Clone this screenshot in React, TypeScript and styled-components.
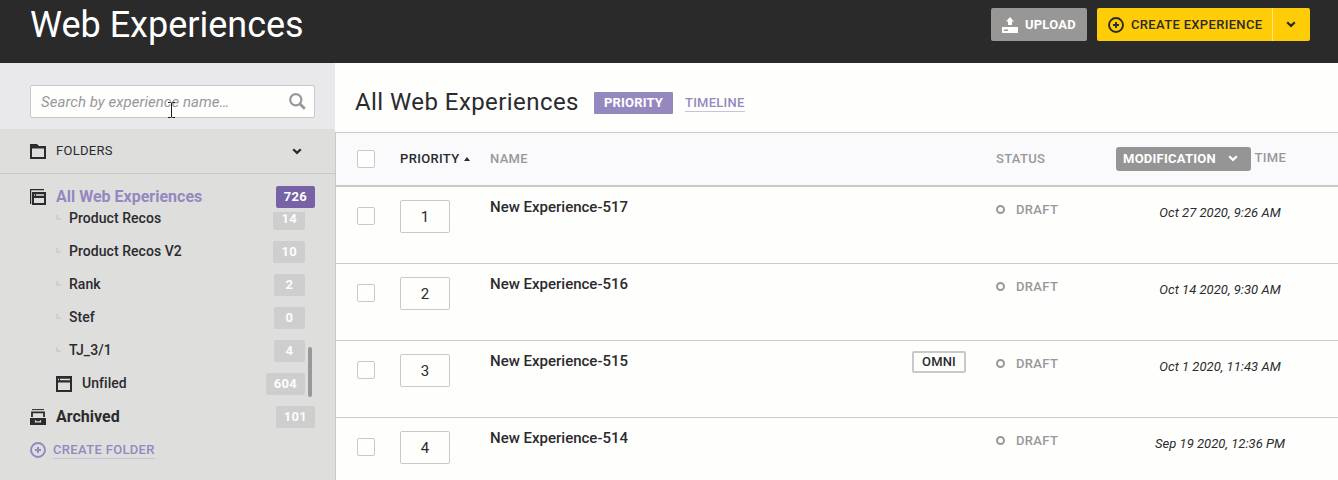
import React from "react";
import styled, { createGlobalStyle } from "styled-components";

const GlobalStyle = createGlobalStyle`
  * { box-sizing: border-box; }
  body {
    margin: 0;
    background: #fefefd;
    color: #2b2b2e;
    font-family: Roboto, "Liberation Sans", sans-serif;
    overflow: hidden;
  }
  button, input { font-family: inherit; }
  svg { display: block; flex: none; }
`;

const Page = styled.div`
  display: flex;
  flex-direction: column;
  width: 1338px;
  height: 480px;
  overflow: hidden;
`;

const TopBar = styled.header`
  display: flex;
  flex: none;
  height: 63px;
  padding: 0 28px 0 30px;
  background: #2a2a2b;
`;

const PageTitle = styled.h1`
  flex: 1;
  margin: 4px 0 0;
  color: #fff;
  font-size: 36px;
  font-weight: 400;
  line-height: 42px;
`;

const Actions = styled.div`
  display: flex;
  gap: 10px;
  margin-top: 8px;
  height: 33px;
`;

const UploadButton = styled.button`
  display: flex;
  align-items: center;
  gap: 7px;
  width: 96px;
  padding: 0 0 0 11px;
  border: 0;
  border-radius: 2px;
  background: #989795;
  color: #fff;
  font-size: 13px;
  font-weight: 700;
  letter-spacing: 0.2px;
`;

const SplitButton = styled.div`
  display: flex;
  width: 213px;
  border-radius: 2px;
  overflow: hidden;
  background: #fecd07;
`;

const SplitMain = styled.button`
  display: flex;
  align-items: center;
  gap: 7px;
  width: 176px;
  padding: 0 0 0 11px;
  border: 0;
  border-right: 1px solid #fee48a;
  background: none;
  color: #2b2b2e;
  font-size: 13px;
  font-weight: 500;
  letter-spacing: 0.33px;
  white-space: nowrap;
`;

const SplitToggle = styled.button`
  display: flex;
  flex: 1;
  align-items: center;
  justify-content: center;
  padding: 0 2px 0 0;
  border: 0;
  background: none;
  color: #2b2b2e;
`;

const Body = styled.div`
  display: flex;
  flex: 1;
  min-height: 0;
`;

const Sidebar = styled.aside`
  display: flex;
  flex-direction: column;
  flex: none;
  width: 335px;
  background: #dededd;
`;

const SearchArea = styled.div`
  flex: none;
  height: 66px;
  padding: 22px 20px 0 30px;
  background: #e9e9eb;
`;

const SearchBox = styled.label`
  position: relative;
  display: flex;
  align-items: center;
  height: 33px;
  padding: 0 8px 0 10px;
  border: 1px solid #c9c9cb;
  border-radius: 2px;
  background: #fefefd;
`;

const SearchInput = styled.input`
  flex: 1;
  min-width: 0;
  padding: 0;
  border: 0;
  outline: 0;
  background: none;
  color: #2b2b2e;
  font-size: 15px;
  font-style: italic;
  letter-spacing: 0.04px;
  &::placeholder { color: #98989a; opacity: 1; }
`;

const TextCursor = styled.svg`
  position: absolute;
  left: 137px;
  top: 16px;
`;

const FoldersHead = styled.div`
  display: flex;
  flex: none;
  align-items: center;
  height: 45px;
  padding: 0 33px 0 30px;
  border-bottom: 1px solid #c9c9c9;
`;

const FoldersLabel = styled.span`
  flex: 1;
  margin-left: 10px;
  font-size: 13px;
  letter-spacing: 0.3px;
  line-height: 16px;
`;

const Nav = styled.nav`
  display: flex;
  flex-direction: column;
  padding-top: 6px;
`;

const NavRow = styled.div<{ $nested?: boolean }>`
  display: flex;
  flex: none;
  align-items: center;
  height: 33px;
  padding: 0 ${(p) => (p.$nested ? 30 : 20)}px 0 ${(p) => (p.$nested ? 56 : 30)}px;
`;

const NavLabel = styled.span<{ $size?: number; $gap: number; $active?: boolean }>`
  flex: 1;
  margin-left: ${(p) => p.$gap}px;
  padding-bottom: ${(p) => (p.$size === 16 ? 0 : 2)}px;
  color: ${(p) => (p.$active ? "#9588bf" : "#2b2b2e")};
  font-size: ${(p) => p.$size ?? 14}px;
  font-weight: ${(p) => (p.$size === 16 ? 700 : 500)};
  letter-spacing: ${(p) => (p.$size === 16 ? 0 : 0.05)}px;
  line-height: 20px;
  white-space: nowrap;
`;

const Count = styled.span<{ $active?: boolean }>`
  min-width: 31px;
  height: 22px;
  margin-top: 1px;
  padding: 0 8px;
  border-radius: 2px;
  background: ${(p) => (p.$active ? "#7762a6" : "#cecece")};
  color: ${(p) => (p.$active ? "#fff" : "#fdfdfc")};
  font-size: 13px;
  font-weight: 700;
  letter-spacing: 0.3px;
  line-height: 22px;
  text-align: center;
`;

const Branch = styled.span`
  width: 5px;
  height: 5px;
  margin-top: -2px;
  border-left: 2px solid #cfcfd0;
  border-bottom: 2px solid #cfcfd0;
`;

const FolderScroll = styled.div`
  position: relative;
  display: flex;
  flex-direction: column;
  justify-content: flex-end;
  height: 188px;
  margin-top: -1px;
  overflow: hidden;
`;

const ScrollThumb = styled.div`
  position: absolute;
  top: 135px;
  right: 23px;
  width: 4px;
  height: 50px;
  border-radius: 2px;
  background: #98989a;
`;

const CreateFolder = styled.button`
  display: flex;
  align-items: center;
  gap: 7px;
  height: 33px;
  padding: 0 30px;
  border: 0;
  background: none;
  color: #9588bf;
`;

const LinkText = styled.span<{ $spacing: number }>`
  height: 18px;
  border-bottom: 1px solid #c9c2dc;
  color: #9588bf;
  font-size: 13px;
  font-weight: 500;
  letter-spacing: ${(p) => p.$spacing}px;
  line-height: 18px;
`;

const Main = styled.main`
  flex: 1;
  min-width: 0;
`;

const ListHeading = styled.div`
  display: flex;
  align-items: center;
  height: 69px;
  padding: 10px 0 0 20px;
`;

const ListTitle = styled.h2`
  width: 239px;
  margin: -2px 0 0;
  font-size: 24px;
  font-weight: 400;
  letter-spacing: 0.43px;
  line-height: 30px;
  white-space: nowrap;
`;

const ViewTab = styled.span`
  width: 79px;
  height: 22px;
  margin-right: 12px;
  border-radius: 1px;
  background: #9588bf;
  color: #fff;
  font-size: 13px;
  font-weight: 700;
  letter-spacing: 0.2px;
  line-height: 22px;
  text-align: center;
`;

const Table = styled.div`
  border-left: 1px solid #c9c9cb;
`;

const TableHead = styled.div`
  display: grid;
  grid-template-columns: 64px 90px 506px 120px 222px;
  align-items: center;
  height: 55px;
  border-top: 1px solid #c9c9cb;
  border-bottom: 2px solid #c9c9cb;
  background: #fafafc;
`;

const HeadCell = styled.div<{ $active?: boolean }>`
  display: flex;
  align-items: center;
  gap: 5px;
  color: ${(p) => (p.$active ? "#2b2b2e" : "#98989a")};
  font-size: 13px;
  font-weight: 500;
  letter-spacing: 0.33px;
  line-height: 18px;
`;

const Checkbox = styled.span`
  display: block;
  width: 18px;
  height: 18px;
  margin-left: 21px;
  border: 1px solid #c9c9cb;
  border-radius: 2px;
  background: #fefefd;
`;

const ModificationSelect = styled.button`
  display: flex;
  align-items: center;
  width: 135px;
  height: 24px;
  padding: 0 13px 1px 7px;
  justify-content: space-between;
  border: 0;
  border-radius: 3px;
  background: #959595;
  color: #fff;
  font-size: 13px;
  font-weight: 700;
  letter-spacing: 0.25px;
`;

const TimeLabel = styled.span`
  margin: -2px 0 0 -1.5px;
`;

const Row = styled.div`
  display: grid;
  grid-template-columns: 64px 90px 422px 84px 120px 208px;
  align-items: start;
  height: 77px;
  border-bottom: 1px solid #c9cbcd;
`;

const RowCheck = styled.div`
  padding-top: 20px;
`;

const PriorityBox = styled.div`
  width: 50px;
  height: 33px;
  margin-top: 13px;
  border: 1px solid #c9c9cb;
  border-radius: 2px;
  font-size: 15px;
  line-height: 32px;
  text-align: center;
`;

const Name = styled.div`
  padding-top: 10px;
  font-size: 15px;
  font-weight: 500;
  line-height: 20px;
`;

const OmniTag = styled.span`
  display: block;
  width: 54px;
  height: 22px;
  margin-top: 10px;
  border: 2px solid #c9c9cc;
  border-radius: 2px;
  font-size: 13px;
  font-weight: 500;
  letter-spacing: 0.15px;
  line-height: 18px;
  text-align: center;
`;

const Status = styled.div`
  display: flex;
  align-items: center;
  gap: 11px;
  height: 19px;
  margin-top: 13px;
  color: #98989a;
  font-size: 13px;
  font-weight: 500;
  letter-spacing: 0.35px;
`;

const Ring = styled.span`
  width: 9px;
  height: 9px;
  border: 2px solid #98989a;
  border-radius: 50%;
`;

const DateText = styled.div`
  padding-top: 16px;
  font-size: 13px;
  font-style: italic;
  letter-spacing: 0.03px;
  line-height: 20px;
  text-align: center;
`;

const Chevron = () => (
  <svg width="10" height="7" viewBox="0 0 10 7" fill="none" stroke="currentColor" strokeWidth="2.2">
    <path d="M1.2 1.2 5 4.9 8.8 1.2" />
  </svg>
);

const PlusCircle = () => (
  <svg width="16" height="16" viewBox="0 0 16 16" fill="none" stroke="currentColor" strokeWidth="1.9">
    <circle cx="8" cy="8" r="7" />
    <path d="M8 5v6M5 8h6" />
  </svg>
);

const UploadIcon = () => (
  <svg width="16" height="16" viewBox="0 0 16 16" fill="currentColor">
    <path d="M8 0 12 4.5H10V8H6V4.5H4z" />
    <path fillRule="evenodd" d="M0 10h16v6H0zM2 12.4v1.6h4v-1.6z" />
  </svg>
);

const SearchIcon = () => (
  <svg width="17" height="17" viewBox="0 0 17 17" fill="none" stroke="#98989a">
    <circle cx="6.8" cy="6.8" r="5.6" strokeWidth="2.2" />
    <path d="m11 11 4.8 4.8" strokeWidth="2.8" />
  </svg>
);

const FolderIcon = () => (
  <svg width="16" height="15" viewBox="0 0 16 15" fill="#2b2b2e">
    <path fillRule="evenodd" d="M0 0h7l2 2h7v13H0zM2 4.5V13h12V4.5z" />
  </svg>
);

const StackIcon = () => (
  <svg width="16" height="16" viewBox="0 0 16 16">
    <path d="M.6 15V.6H14" fill="none" stroke="#2b2b2e" strokeWidth="1.2" />
    <path fillRule="evenodd" fill="#2b2b2e" d="M2 3h14v13H2zM4 9v5h10V9z" />
    <path d="M4 6h1M6 6h8" stroke="#dededd" strokeWidth="1.3" />
  </svg>
);

const WindowIcon = () => (
  <svg width="16" height="16" viewBox="0 0 16 16">
    <path fillRule="evenodd" fill="#2b2b2e" d="M0 0h16v16H0zM2 6.5V14h12V6.5z" />
    <path d="M2 3.5h1M4 3.5h10" stroke="#dededd" strokeWidth="1.3" />
  </svg>
);

const ArchiveIcon = () => (
  <svg width="16" height="16" viewBox="0 0 16 16">
    <path d="M2 .6h12" stroke="#2b2b2e" strokeWidth="1" />
    <path d="M2 8V3.3h12V8" fill="none" stroke="#2b2b2e" strokeWidth="1.8" />
    <path d="M0 9h16v7H0z" fill="#2b2b2e" />
    <path d="M5.5 11.2v1.7h5v-1.7" fill="none" stroke="#dededd" strokeWidth="1.2" />
  </svg>
);

const SortUp = () => (
  <svg width="6" height="4" viewBox="0 0 6 4" fill="#2b2b2e">
    <path d="M3 0 6 4H0z" />
  </svg>
);

const folders = [
  { name: "Product Recos", count: 14 },
  { name: "Product Recos V2", count: 10 },
  { name: "Rank", count: 2 },
  { name: "Stef", count: 0 },
  { name: "TJ_3/1", count: 4 },
];

const experiences = [
  { id: 1, name: "New Experience-517", omni: false, date: "Oct 27 2020, 9:26 AM" },
  { id: 2, name: "New Experience-516", omni: false, date: "Oct 14 2020, 9:30 AM" },
  { id: 3, name: "New Experience-515", omni: true, date: "Oct 1 2020, 11:43 AM" },
  { id: 4, name: "New Experience-514", omni: false, date: "Sep 19 2020, 12:36 PM" },
];

export default function App() {
  return (
    <Page>
      <GlobalStyle />
      <TopBar>
        <PageTitle>Web Experiences</PageTitle>
        <Actions>
          <UploadButton>
            <UploadIcon />
            UPLOAD
          </UploadButton>
          <SplitButton>
            <SplitMain>
              <PlusCircle />
              CREATE EXPERIENCE
            </SplitMain>
            <SplitToggle aria-label="More options">
              <Chevron />
            </SplitToggle>
          </SplitButton>
        </Actions>
      </TopBar>
      <Body>
        <Sidebar>
          <SearchArea>
            <SearchBox>
              <SearchInput placeholder="Search by experience name…" />
              <SearchIcon />
              <TextCursor width="7" height="16" viewBox="0 0 7 16" fill="none" stroke="#1c1c1c">
                <path d="M0 .5h2.5l1 .5 1-.5H7M3.5 1v14M0 15.5h2.5l1-.5 1 .5H7" />
              </TextCursor>
            </SearchBox>
          </SearchArea>
          <FoldersHead>
            <FolderIcon />
            <FoldersLabel>FOLDERS</FoldersLabel>
            <Chevron />
          </FoldersHead>
          <Nav>
            <NavRow>
              <StackIcon />
              <NavLabel $gap={10} $size={16} $active>All Web Experiences</NavLabel>
              <Count $active>726</Count>
            </NavRow>
            <FolderScroll>
              {folders.map((f) => (
                <NavRow key={f.name} $nested>
                  <Branch />
                  <NavLabel $gap={8}>{f.name}</NavLabel>
                  <Count>{f.count}</Count>
                </NavRow>
              ))}
              <NavRow $nested>
                <WindowIcon />
                <NavLabel $gap={10}>Unfiled</NavLabel>
                <Count>604</Count>
              </NavRow>
              <ScrollThumb />
            </FolderScroll>
            <NavRow>
              <ArchiveIcon />
              <NavLabel $gap={10} $size={16}>Archived</NavLabel>
              <Count>101</Count>
            </NavRow>
            <CreateFolder>
              <PlusCircle />
              <LinkText $spacing={0.33}>CREATE FOLDER</LinkText>
            </CreateFolder>
          </Nav>
        </Sidebar>
        <Main>
          <ListHeading>
            <ListTitle>All Web Experiences</ListTitle>
            <ViewTab>PRIORITY</ViewTab>
            <LinkText $spacing={0.25}>TIMELINE</LinkText>
          </ListHeading>
          <Table>
            <TableHead>
              <Checkbox />
              <HeadCell $active>
                PRIORITY
                <SortUp />
              </HeadCell>
              <HeadCell>NAME</HeadCell>
              <HeadCell>STATUS</HeadCell>
              <HeadCell>
                <ModificationSelect>
                  MODIFICATION
                  <Chevron />
                </ModificationSelect>
                <TimeLabel>TIME</TimeLabel>
              </HeadCell>
            </TableHead>
            {experiences.map((e) => (
              <Row key={e.id}>
                <RowCheck>
                  <Checkbox />
                </RowCheck>
                <PriorityBox>{e.id}</PriorityBox>
                <Name>{e.name}</Name>
                <div>{e.omni && <OmniTag>OMNI</OmniTag>}</div>
                <Status>
                  <Ring />
                  DRAFT
                </Status>
                <DateText>{e.date}</DateText>
              </Row>
            ))}
          </Table>
        </Main>
      </Body>
    </Page>
  );
}
